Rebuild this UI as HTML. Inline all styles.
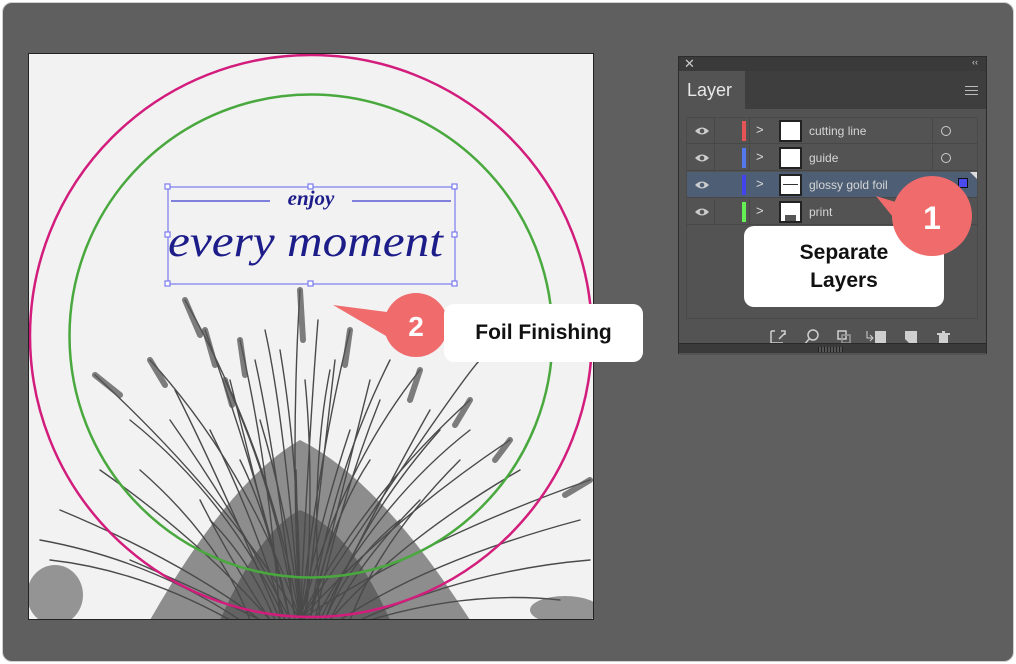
<!DOCTYPE html>
<html><head><meta charset="utf-8"><style>
*{margin:0;padding:0;box-sizing:border-box}
body{width:1016px;height:664px;background:#fff;position:relative;overflow:hidden;font-family:"Liberation Sans",sans-serif}
.frame{position:absolute;left:2px;top:2px;width:1012px;height:660px;background:#5f5f5f;border-radius:10px;border:1px solid #d0d0d0}
.canvas{position:absolute;left:28px;top:53px;width:566px;height:567px;background:#f2f2f2;border:1px solid #222;overflow:hidden}
.panel{position:absolute;left:678px;top:56px;width:309px;height:298px;background:#434343;border:1px solid #2c2c2c}
.hdr{position:absolute;left:0;top:0;width:100%;height:14px;background:#3a3a3a;color:#ccc;font-size:11px}
.tabbar{position:absolute;left:0;top:14px;width:100%;height:38px;background:#3e3e3e}
.tab{position:absolute;left:0;top:0;width:66px;height:38px;background:#535353;color:#e8e8e8;font-size:18px;padding:9px 0 0 8px}
.body{position:absolute;left:0;top:52px;width:100%;height:246px;background:#535353}
.list{position:absolute;left:7px;top:8px;width:292px;height:202px;border:1px solid #4a4a4a;background:#535353}
.row{position:absolute;left:0;width:290px;height:26px;border-bottom:1px solid #474747;color:#d6d6d6;font-size:12px}
.row.sel{background:#4d5e75}
.eye{position:absolute;left:7px;top:7px}
.vl{position:absolute;top:0;width:1px;height:26px;background:#474747}
.bar{position:absolute;left:55px;top:3px;width:4px;height:20px}
.chev{position:absolute;left:69px;top:4px;color:#ddd;font-size:13px}
.thumb{position:absolute;left:92px;top:2px;width:23px;height:22px;background:#fff;border:2px solid #222}
.nm{position:absolute;left:122px;top:6px}
.circ{position:absolute;left:254px;top:8px;width:10px;height:10px;border:1.5px solid #ccc;border-radius:50%}
.callout{position:absolute;background:#fff;border-radius:10px;color:#111;font-weight:bold;font-family:"Liberation Sans",sans-serif;text-align:center}
</style></head><body>
<div class="frame"></div>
<div class="canvas">
<svg width="566" height="567" viewBox="29 54 566 567" style="position:absolute;left:0;top:0">
<g fill="#3a3a3a" opacity=".55"><path d="M150 620 Q230 480 300 440 Q380 480 470 620 Z"/></g>
<g fill="#3a3a3a" opacity=".5"><path d="M220 620 Q260 530 300 510 Q350 530 390 620 Z"/></g>
<g stroke="#4a4a4a" stroke-width="1.4" fill="none" stroke-linecap="round">
<path d="M300 620 Q290 450 300 290"/><path d="M300 620 Q270 450 185 300"/><path d="M300 620 Q250 470 150 360"/>
<path d="M300 620 Q230 500 95 375"/><path d="M300 620 Q320 450 350 330"/><path d="M300 620 Q340 470 420 370"/>
<path d="M300 620 Q360 500 470 400"/><path d="M300 620 Q390 520 510 440"/><path d="M300 620 Q420 540 590 480"/>
<path d="M290 620 Q260 480 205 330"/><path d="M290 620 Q240 520 170 420"/><path d="M310 620 Q330 480 390 360"/>
<path d="M280 620 Q270 470 240 340"/><path d="M320 620 Q310 470 330 370"/><path d="M270 620 Q200 540 100 470"/>
<path d="M330 620 Q400 540 520 470"/><path d="M260 620 Q180 560 60 510"/><path d="M340 620 Q430 560 580 520"/>
<path d="M300 620 Q300 470 280 350"/><path d="M305 620 Q315 480 305 380"/><path d="M295 620 Q280 500 225 380"/>
<path d="M315 620 Q340 500 380 400"/><path d="M250 620 Q220 540 140 470"/><path d="M350 620 Q380 540 460 460"/>
<path d="M240 620 Q150 560 40 540"/><path d="M360 620 Q470 570 590 560"/><path d="M285 620 Q255 520 210 430"/>
<path d="M325 620 Q360 520 440 430"/><path d="M300 620 Q290 520 260 420"/><path d="M300 620 Q320 520 350 430"/>
<path d="M270 620 Q230 560 200 500"/><path d="M330 620 Q360 560 420 500"/><path d="M300 620 Q460 380 480 360"/>
<path d="M295 620 Q275 450 255 360"/><path d="M305 620 Q325 450 335 360"/><path d="M310 620 Q350 460 370 380"/>
<path d="M290 620 Q250 460 230 380"/><path d="M300 620 Q285 420 265 330"/><path d="M300 620 Q310 420 318 320"/>
<path d="M285 620 Q230 500 130 420"/><path d="M315 620 Q380 500 470 430"/><path d="M280 620 Q220 480 175 390"/>
<path d="M320 620 Q390 480 430 410"/><path d="M290 620 Q270 520 240 460"/><path d="M310 620 Q330 520 370 460"/>
<path d="M275 620 Q250 560 210 520"/><path d="M325 620 Q350 560 400 520"/><path d="M300 620 Q298 540 296 470"/>
<path d="M230 620 Q140 570 50 560"/><path d="M370 620 Q470 590 560 600"/><path d="M260 620 Q200 590 130 560"/>
</g>
<g stroke="#555" stroke-width="6" stroke-linecap="round" fill="none" opacity=".75">
<path d="M300 290 L303 340"/><path d="M185 300 L200 335"/><path d="M95 375 L120 395"/><path d="M350 330 L345 365"/>
<path d="M420 370 L410 400"/><path d="M470 400 L455 425"/><path d="M510 440 L495 460"/><path d="M150 360 L165 385"/>
<path d="M205 330 L215 365"/><path d="M240 340 L245 375"/><path d="M590 480 L565 495"/><path d="M225 380 L232 405"/>
</g>
<g fill="#555" opacity=".6"><ellipse cx="55" cy="595" rx="28" ry="30"/><ellipse cx="565" cy="610" rx="35" ry="14"/></g>
<circle cx="311" cy="336" r="281" stroke="#d21d7d" stroke-width="2.5" fill="none"/>
<circle cx="311" cy="336" r="241.5" stroke="#49a83e" stroke-width="2.5" fill="none"/>
<g stroke="#7a7aef" stroke-width="1.2" fill="#fff">
<rect x="168" y="187" width="287" height="97" fill="none"/>
<line x1="171" y1="201" x2="270" y2="201" stroke="#5b5bd6" stroke-width="1.5"/><line x1="352" y1="201" x2="451" y2="201" stroke="#5b5bd6" stroke-width="1.5"/>
<rect x="165" y="184" width="5" height="5"/><rect x="308" y="184" width="5" height="5"/><rect x="452" y="184" width="5" height="5"/>
<rect x="165" y="232" width="5" height="5"/><rect x="452" y="232" width="5" height="5"/>
<rect x="165" y="281" width="5" height="5"/><rect x="308" y="281" width="5" height="5"/><rect x="452" y="281" width="5" height="5"/>
</g>
<text x="311" y="205" text-anchor="middle" font-family="Liberation Serif" font-style="italic" font-weight="bold" font-size="21" fill="#1d1d8a">enjoy</text>
<text x="168" y="256" font-family="Liberation Serif" font-style="italic" font-size="44" fill="#1d1d8a" textLength="275" lengthAdjust="spacingAndGlyphs">every moment</text>
</svg>
</div>
<svg style="position:absolute;left:0;top:0" width="1016" height="664">
<path d="M333 305 L395 313 L410 350 Z" fill="#f06b6b"/>
<circle cx="416" cy="325" r="32" fill="#f06b6b"/>
<text x="416" y="336" text-anchor="middle" font-family="Liberation Sans" font-weight="bold" font-size="28" fill="#fff">2</text>
</svg>
<div class="callout" style="left:444px;top:304px;width:199px;height:58px;font-size:21px;padding-top:17px">Foil Finishing</div>
<div class="panel">
<div class="hdr"><span style="position:absolute;left:5px;top:-1px;font-size:13px">✕</span><span style="position:absolute;right:8px;top:0;font-size:9px">‹‹</span></div>
<div class="tabbar"><div class="tab">Layer</div>
<div style="position:absolute;right:8px;top:15px;width:13px;height:9px;border-top:1.5px solid #bbb;border-bottom:1.5px solid #bbb"><div style="margin-top:2.5px;height:1.5px;background:#bbb"></div></div></div>
<div class="body">
<div class="list">
<div class="row" style="top:0"><svg class="eye" width="16" height="12"><path d="M1 6 Q8 -1 15 6 Q8 13 1 6Z" fill="#ccc"/><circle cx="8" cy="6" r="2.3" fill="#535353"/></svg><div class="vl" style="left:27px"></div><div class="vl" style="left:62px"></div><div class="bar" style="background:#e45454"></div><span class="chev">&gt;</span><div class="thumb"></div><span class="nm">cutting line</span><div class="vl" style="left:245px"></div><div class="circ"></div></div>
<div class="row" style="top:27px"><svg class="eye" width="16" height="12"><path d="M1 6 Q8 -1 15 6 Q8 13 1 6Z" fill="#ccc"/><circle cx="8" cy="6" r="2.3" fill="#535353"/></svg><div class="vl" style="left:27px"></div><div class="vl" style="left:62px"></div><div class="bar" style="background:#5577ee"></div><span class="chev">&gt;</span><div class="thumb"></div><span class="nm">guide</span><div class="vl" style="left:245px"></div><div class="circ"></div></div>
<div class="row sel" style="top:54px"><svg class="eye" width="16" height="12"><path d="M1 6 Q8 -1 15 6 Q8 13 1 6Z" fill="#ccc"/><circle cx="8" cy="6" r="2.3" fill="#4d5e75"/></svg><div class="bar" style="background:#4444ee"></div><span class="chev">&gt;</span><div class="thumb"><div style="margin:8px 2px 0;height:1px;background:#333"></div></div><span class="nm">glossy gold foil</span><div style="position:absolute;left:271px;top:6px;width:10px;height:10px;background:#4a4aee;border:1.5px solid #111"></div><div style="position:absolute;right:0;top:0;border-top:7px solid #ddd;border-left:7px solid transparent"></div></div>
<div class="row" style="top:81px"><svg class="eye" width="16" height="12"><path d="M1 6 Q8 -1 15 6 Q8 13 1 6Z" fill="#ccc"/><circle cx="8" cy="6" r="2.3" fill="#535353"/></svg><div class="vl" style="left:27px"></div><div class="vl" style="left:62px"></div><div class="bar" style="background:#66ee55"></div><span class="chev">&gt;</span><div class="thumb"><div style="margin:12px 4px 0;height:6px;background:#555"></div></div><span class="nm">print</span></div>
</div>
<svg style="position:absolute;left:0;top:210px" width="309" height="36">
<g stroke="#cfcfcf" stroke-width="1.5" fill="none">
<path d="M92 12 V24 H104 M96 12 H92 M100 20 L106 14 M102 12 H106 V16"/>
<circle cx="134" cy="16" r="5"/><path d="M130 20 L125 26"/>
<rect x="159" y="12" width="8" height="8"/><rect x="163" y="16" width="8" height="8" stroke="#999"/>
</g>
<g fill="#cfcfcf"><path d="M196 12 H207 V24 H196 Z"/><path d="M188 12 V19 H194 M191 16 L194 19 L191 22" stroke="#cfcfcf" fill="none"/>
<path d="M226 12 H238 V24 H230 L226 20 Z"/>
<path d="M258 14 H271 V16 H258Z M260 16 H269 V26 H260Z M263 12 H266 V14 H263Z"/></g>
</svg>
</div>
<div style="position:absolute;left:0;top:286px;width:100%;height:10px;background:#3a3a3a;border-top:1px solid #2a2a2a"><div style="position:absolute;left:139px;top:3px;width:25px;height:5px;background:repeating-linear-gradient(90deg,#222 0 1px,#555 1px 3px)"></div></div>
</div>
<div class="callout" style="left:744px;top:226px;width:200px;height:81px;font-size:21px;padding-top:13px;line-height:28px">Separate<br>Layers</div>
<svg style="position:absolute;left:0;top:0" width="1016" height="664">
<path d="M876 196 L905 205 L905 232 Z" fill="#f06b6b"/>
<circle cx="932" cy="216" r="40" fill="#f06b6b"/>
<text x="932" y="229" text-anchor="middle" font-family="Liberation Sans" font-weight="bold" font-size="32" fill="#fff">1</text>
</svg>
</body></html>
